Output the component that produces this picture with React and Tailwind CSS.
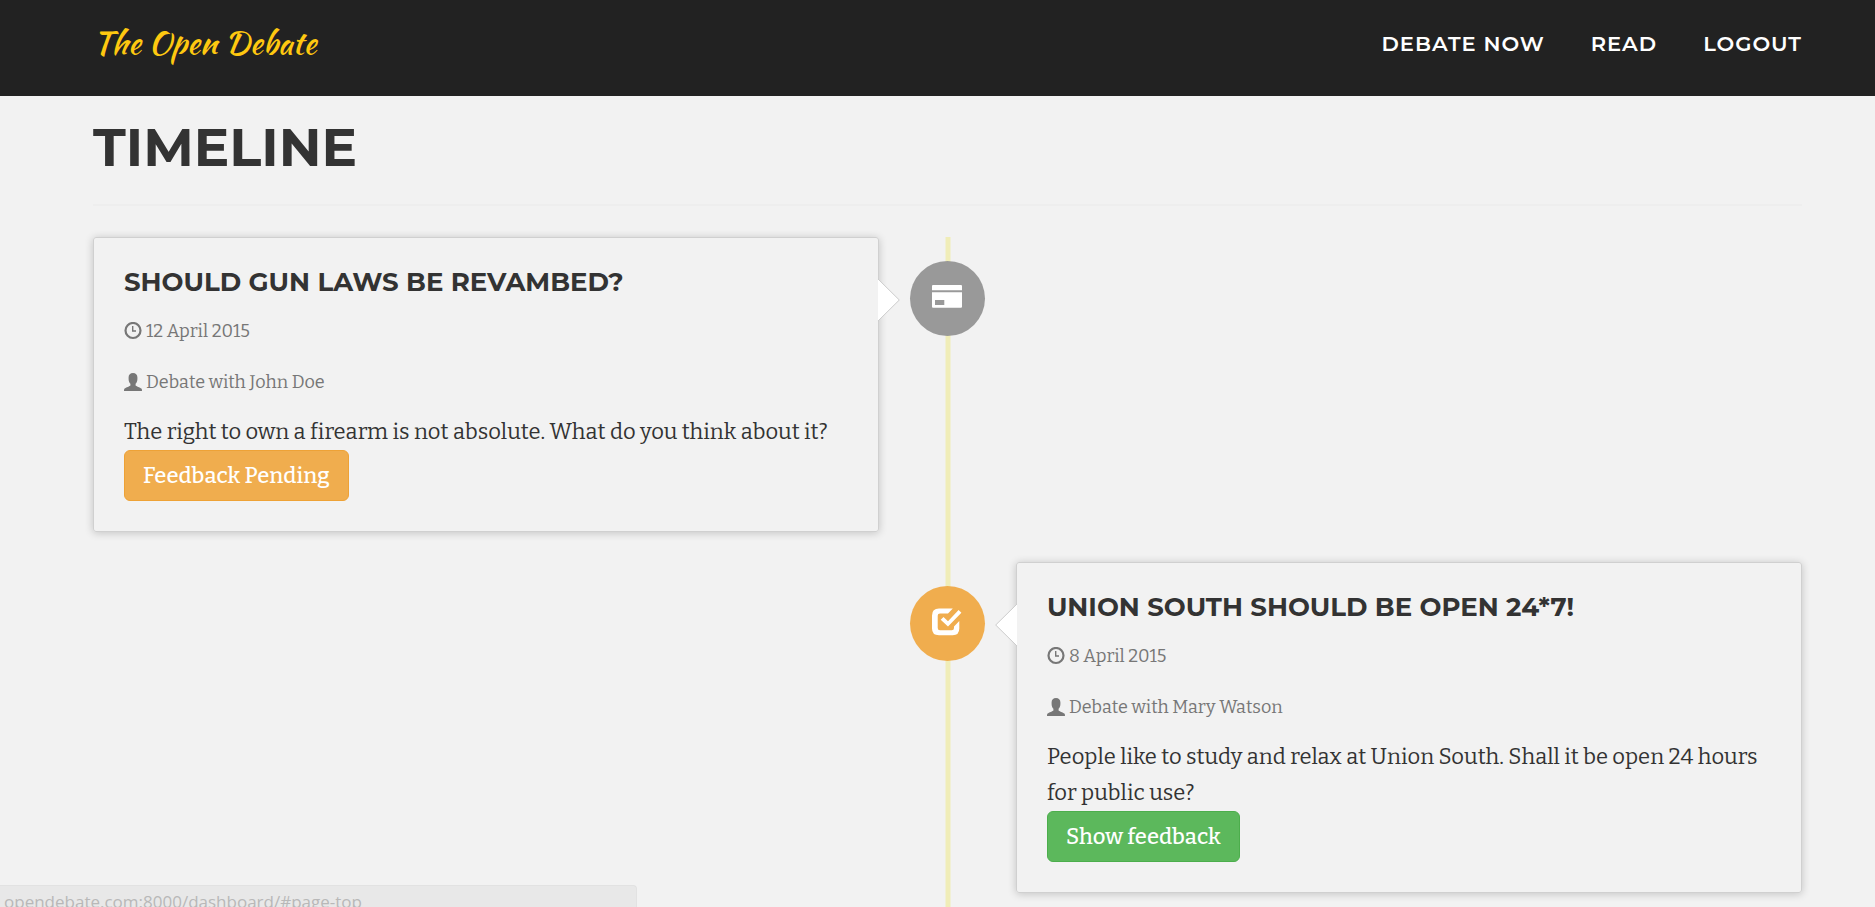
const display = "font-['Montserrat','Inter',sans-serif]";

const entries = [
  {
    title: "Should gun laws be revambed?",
    date: "12 April 2015",
    opponent: "Debate with John Doe",
    text: "The right to own a firearm is not absolute. What do you think about it?",
    action: "Feedback Pending",
    tone: "pending",
    side: "left",
  },
  {
    title: "Union South should be open 24*7!",
    date: "8 April 2015",
    opponent: "Debate with Mary Watson",
    text: "People like to study and relax at Union South. Shall it be open 24 hours for public use?",
    action: "Show feedback",
    tone: "done",
    side: "right",
  },
];

const buttonTone = {
  pending: "border-[#eea236] bg-[#f0ad4e]",
  done: "border-[#4cae4c] bg-[#5cb85c]",
};

function ClockIcon() {
  return (
    <svg className="size-[18px] shrink-0" viewBox="0 0 18 18" fill="none" stroke="currentColor" aria-hidden="true">
      <circle cx="9" cy="8.5" r="7.5" strokeWidth="2.2" />
      <path d="M8.7 3.9V9H12" strokeWidth="1.4" />
    </svg>
  );
}

function PersonIcon() {
  return (
    <svg className="size-[18px] shrink-0" viewBox="0 0 18 18" fill="currentColor" aria-hidden="true">
      <path d="M9 0C11.7 0 13.4 1.6 13.4 4.3V6.2C13.4 8 12.7 9.6 11.6 10.8V12.4C11.8 13.1 16.2 14.4 17.4 15.5C17.9 16 18 16.8 18 18H0C0 16.8.1 16 .6 15.5C1.8 14.4 6.2 13.1 6.4 12.4V10.8C5.3 9.6 4.6 8 4.6 6.2V4.3C4.6 1.6 6.3 0 9 0Z" />
    </svg>
  );
}

function CardIcon() {
  return (
    <svg className="h-[23px] w-[30px]" viewBox="0 0 30 23" aria-hidden="true">
      <path
        fill="#fff"
        fillRule="evenodd"
        d="M1 0H29Q30 0 30 1V5.2H0V1Q0 0 1 0ZM0 7.2H30V21.8Q30 22.8 29 22.8H1Q0 22.8 0 21.8ZM3 15V20H12.3V15Z"
      />
    </svg>
  );
}

function CheckIcon() {
  return (
    <svg className="h-7 w-[30px]" viewBox="0 0 30 28" fill="#fff" aria-hidden="true">
      <path d="M7 .5H20.8L16 5.5H8Q5.7 5.5 5.7 7.8V20Q5.7 22.3 8 22.3H19.8Q22 22.3 22 20V18.4L27.3 13.1V20.5Q27.3 27.3 20.6 27.3H7Q0 27.3 0 20.5V7.5Q0 .5 7 .5Z" />
      <path d="M26.6 1.9L29.4 4.8L16 18.5L8.7 11.7L11.5 8.9L16 13.2Z" />
    </svg>
  );
}

function Badge({ tone }) {
  return (
    <div
      className={`relative mt-6 flex size-[75px] items-center justify-center justify-self-center rounded-full pb-1 pr-0.5 ${
        tone === "pending" ? "bg-[#999]" : "bg-[#f0ad4e]"
      }`}
    >
      {tone === "pending" ? <CardIcon /> : <CheckIcon />}
    </div>
  );
}

function Pointer({ side }) {
  return (
    <svg
      className={`absolute top-10 h-11 w-[22px] ${side === "left" ? "left-full" : "right-full -scale-x-100"}`}
      viewBox="0 0 22 44"
      aria-hidden="true"
    >
      <path d="M-1 0L21.3 22L-1 44" fill="#fff" stroke="#ccc" />
    </svg>
  );
}

function EntryCard({ entry }) {
  return (
    <article
      className={`relative rounded-[3px] border border-[#d0d0d0] p-[30px] shadow-[0_1px_8px_rgba(0,0,0,0.2)] ${
        entry.side === "left" ? "col-start-1" : "col-start-3"
      }`}
    >
      <Pointer side={entry.side} />
      <h2 className={`mb-[17px] text-[26px] font-bold uppercase leading-7 ${display}`}>{entry.title}</h2>
      <p className="mb-[15px] flex items-center gap-1 text-[18px] leading-9 text-[#777]">
        <ClockIcon />
        {entry.date}
      </p>
      <p className="mb-3.5 flex items-center gap-1 text-[18px] leading-9 text-[#777]">
        <PersonIcon />
        {entry.opponent}
      </p>
      <p className="text-[22px] leading-9">{entry.text}</p>
      <button
        type="button"
        className={`block h-[51px] rounded-md border px-[18px] text-[22px] font-medium text-white ${buttonTone[entry.tone]}`}
      >
        {entry.action}
      </button>
    </article>
  );
}

export default function App() {
  return (
    <div className="flex min-h-screen flex-col bg-[#f2f2f2] font-['Roboto_Slab','Bitter','DejaVu_Serif_Condensed','DejaVu_Serif',serif] text-[#333]">
      <header className="flex h-24 items-center justify-between bg-[#222] pb-2 pl-[93px] pr-[73px]">
        <a href="#page-top" className="pb-0.5 font-['Kaushan_Script','Lato',cursive] text-[32px] text-[#fec810]">
          The Open Debate
        </a>
        <nav className={`flex gap-[46px] text-[21px] font-semibold uppercase tracking-[1px] text-white ${display}`}>
          <a href="#debate">Debate now</a>
          <a href="#read">Read</a>
          <a href="#logout">Logout</a>
        </nav>
      </header>

      <main className="flex flex-1 flex-col pl-[93px] pr-[73px]">
        <div className="mb-[31px] border-b-2 border-[#eee] pb-[27px] pt-[21px]">
          <h1 className={`text-[53px] font-bold uppercase leading-[60px] ${display}`}>Timeline</h1>
        </div>
        <ul className="relative flex flex-1 flex-col gap-[30px] pb-3">
          <li aria-hidden="true" className="absolute inset-y-0 left-1/2 w-[5px] -translate-x-1/2 bg-[#f0edb8]" />
          {entries.map((entry) => (
            <li key={entry.title} className="grid grid-cols-[46%_1fr_46%] items-start">
              <EntryCard entry={entry} />
              <div className="col-start-2 row-start-1 grid">
                <Badge tone={entry.tone} />
              </div>
            </li>
          ))}
        </ul>
      </main>

      <div className="fixed bottom-0 left-0 h-[22px] w-[637px] overflow-hidden rounded-tr border-r border-t border-[#e2e2e2] bg-[#e8e8e8] pl-1 pt-1 font-['Open_Sans',sans-serif] text-[17px] leading-6 text-[#b8b8b8]">
        opendebate.com:8000/dashboard/#page-top
      </div>
    </div>
  );
}
